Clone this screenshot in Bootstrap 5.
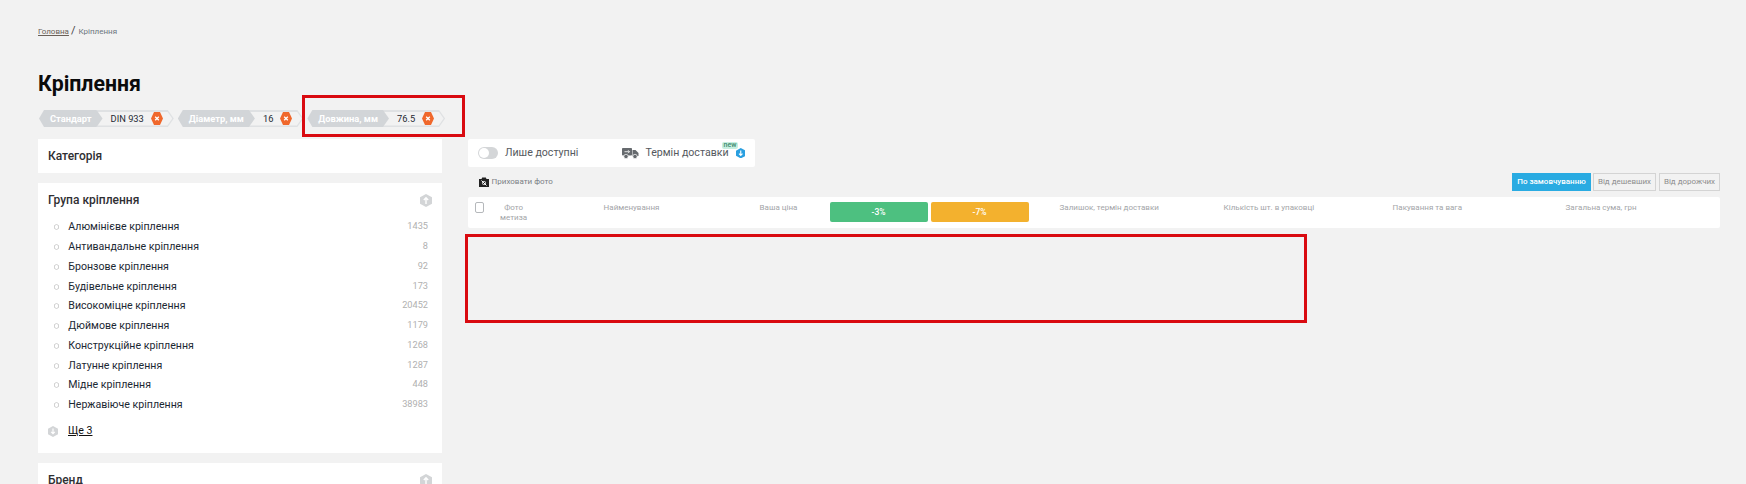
<!DOCTYPE html>
<html lang="uk">
<head>
  <meta charset="UTF-8" />
  <title>Кріплення</title>
  <link href="https://cdn.jsdelivr.net/npm/bootstrap@5.3.3/dist/css/bootstrap.min.css" rel="stylesheet" />
  <style>
    html, body { height: 484px; overflow: hidden; }
    body { background: #f2f2f2; font-family: Roboto, "Liberation Sans", sans-serif; color: #222; }
    .page-wrap { position: relative; height: 484px; overflow: hidden; padding: 25px 26px 0 38px; width: 1746px; }
    .crumbs { font-size: 8px; line-height: 12px; color: #6d7680; }
    .crumbs a { color: #6a6058; }
    .crumbs .sep { font-size: 11px; color: #444; margin: 0 3px 0 2px; }
    .page-title { font-size: 21.3px; font-weight: 700; color: #0b0b0b; line-height: 26px; margin: 33px 0 0; }
    .chips { display: flex; gap: 4px; margin-top: 13px; margin-left: 1px; height: 17px; }
    .chip { display: flex; height: 17px; }
    .chip-label { background: #d2d5d8; color: #fff; font-size: 9.3px; font-weight: 700; line-height: 17px; padding: 0 11px; clip-path: polygon(5px 0, calc(100% - 6px) 0, 100% 50%, calc(100% - 6px) 100%, 5px 100%, 0 50%); position: relative; z-index: 1; }
    .chip-value { position: relative; margin-left: -6px; display: flex; align-items: center; gap: 7px; padding: 0 11px 0 14px; font-size: 9.3px; color: #1f2a33; background: #dfe1e3; clip-path: polygon(0 0, calc(100% - 6px) 0, 100% 50%, calc(100% - 6px) 100%, 0 100%); }
    .chip-value::before { content: ""; position: absolute; inset: 1.5px 1.5px 1.5px 0; background: #f2f2f2; clip-path: polygon(0 0, calc(100% - 5px) 0, 100% 50%, calc(100% - 5px) 100%, 0 100%); }
    .chip-value > * { position: relative; }
    .columns { display: flex; gap: 25.6px; margin-top: 12px; }
    .side-col { width: 404px; flex: none; }
    .main-col { flex: 1; min-width: 0; }
    .filter-box { background: #fff; padding: 0 10px; margin-bottom: 10px; }
    .filter-head { display: flex; justify-content: space-between; align-items: center; font-size: 12px; font-weight: 500; color: #2f2f33; height: 34px; }
    .filter-list { margin: .5px 0 0; padding: 0; list-style: none; }
    .filter-list li { display: flex; align-items: center; height: 19.75px; font-size: 10.6px; color: #1c2833; }
    .filter-list .dot { width: 5px; height: 6px; margin: 0 9.3px 0 6px; flex: none; }
    .filter-list .num { margin-left: auto; margin-right: 4px; font-size: 9.2px; color: #b0b0b0; margin-top: -2px; }
    .more-link { display: flex; align-items: center; gap: 10px; margin-top: 6px; height: 20px; font-size: 10.6px; }
    .more-link a { color: #111; }
    .avail-box { width: 287px; height: 28px; background: #fff; border-radius: 2px; display: flex; align-items: center; font-size: 10.6px; color: #55595e; padding-left: 10.4px; position: relative; }
    .toggle-fake { width: 20px; height: 12px; border-radius: 6px; background: #d4d6d8; position: relative; margin-right: 7px; }
    .toggle-fake::before { content: ""; position: absolute; left: 1px; top: 1px; width: 10px; height: 10px; border-radius: 50%; background: #fff; }
    .new-tag { position: absolute; left: 254px; top: 3px; font-size: 7px; line-height: 7px; font-weight: 500; color: #3d8a6d; background: #c6efe0; border-radius: 2px; padding: 0 2px; }
    .tools-row { display: flex; justify-content: space-between; align-items: center; height: 18px; margin-top: 6px; margin-bottom: 6px; }
    .hide-photo { display: flex; align-items: center; gap: 2px; font-size: 8px; color: #7b7f85; margin-left: 10px; }
    .sort-btns { display: flex; gap: 2px; }
    .sort-btn { height: 18px; font-size: 8px; line-height: 16px; border: 1px solid #d4d4d4; color: #8d8d8d; background: #f2f2f2; white-space: nowrap; text-align: center; }
    .sort-btn.on { background: #29abe2; border-color: #29abe2; color: #fff; font-weight: 500; }
    .head-box { position: relative; height: 31px; background: #fff; border-radius: 2px; display: grid; grid-template-columns: 26px 110px 156px 70px 98px 3px 98px 31px 164px 169px 173px 1fr; font-size: 8px; color: #a3a5a8; line-height: 10px; white-space: nowrap; }
    .head-box > div { padding-top: 6px; }
    .head-check { width: 9px; height: 11px; margin: -1px 0 0 7px; border: 1px solid #b5b8bb; border-radius: 2px; }
    .head-photo { text-align: center; width: 40px; }
    .price-tag { height: 20px; margin-top: 5px; padding: 0 !important; border-radius: 2px; color: #fff; font-weight: 500; text-align: center; line-height: 20px; font-size: 8.5px; }
    .mark-frame { position: absolute; border: 3px solid #d90a10; pointer-events: none; }
    .mark-top { left: 302px; top: 95px; width: 163px; height: 42px; }
    .mark-mid { left: 465px; top: 234px; width: 842px; height: 89px; }
  </style>
</head>
<body>
  <div class="page-wrap">
    <div class="crumbs"><a href="#">Головна</a><span class="sep">/</span>Кріплення</div>
    <h1 class="page-title">Кріплення</h1>

    <div class="chips">
      <div class="chip">
        <span class="chip-label">Стандарт</span>
        <span class="chip-value"><span>DIN 933</span>
          <svg width="12" height="13" viewBox="0 0 12 13"><polygon points="3,0 9,0 12,6.5 9,13 3,13 0,6.5" fill="#f0682c"/><path d="M4.2 4.7l3.6 3.6M7.8 4.7l-3.6 3.6" stroke="#fff" stroke-width="1.3"/></svg>
        </span>
      </div>
      <div class="chip">
        <span class="chip-label">Діаметр, мм</span>
        <span class="chip-value"><span>16</span>
          <svg width="12" height="13" viewBox="0 0 12 13"><polygon points="3,0 9,0 12,6.5 9,13 3,13 0,6.5" fill="#f0682c"/><path d="M4.2 4.7l3.6 3.6M7.8 4.7l-3.6 3.6" stroke="#fff" stroke-width="1.3"/></svg>
        </span>
      </div>
      <div class="chip">
        <span class="chip-label">Довжина, мм</span>
        <span class="chip-value"><span>76.5</span>
          <svg width="12" height="13" viewBox="0 0 12 13"><polygon points="3,0 9,0 12,6.5 9,13 3,13 0,6.5" fill="#f0682c"/><path d="M4.2 4.7l3.6 3.6M7.8 4.7l-3.6 3.6" stroke="#fff" stroke-width="1.3"/></svg>
        </span>
      </div>
    </div>

    <div class="columns">
      <aside class="side-col">
        <div class="filter-box"><div class="filter-head">Категорія</div></div>

        <div class="filter-box" style="height:270px">
          <div class="filter-head">Група кріплення
            <svg width="12" height="13" viewBox="0 0 12 13"><polygon points="6,0 12,3.2 12,9.8 6,13 0,9.8 0,3.2" fill="#d3d5d7"/><path d="M6 10V4M3.8 6L6 3.8 8.2 6" stroke="#fff" stroke-width="1.4" fill="none"/></svg>
          </div>
          <ul class="filter-list" id="groupList"></ul>
          <div class="more-link">
            <svg width="10" height="11" viewBox="0 0 12 13"><polygon points="6,0 12,3.2 12,9.8 6,13 0,9.8 0,3.2" fill="#d3d5d7"/><path d="M6 3v6M3.8 7L6 9.2 8.2 7" stroke="#fff" stroke-width="1.4" fill="none"/></svg>
            <a href="#">Ще 3</a>
          </div>
        </div>

        <div class="filter-box" style="height:60px">
          <div class="filter-head">Бренд
            <svg width="12" height="13" viewBox="0 0 12 13"><polygon points="6,0 12,3.2 12,9.8 6,13 0,9.8 0,3.2" fill="#d3d5d7"/><path d="M6 10V4M3.8 6L6 3.8 8.2 6" stroke="#fff" stroke-width="1.4" fill="none"/></svg>
          </div>
        </div>
      </aside>

      <main class="main-col">
        <div class="avail-box">
          <span class="toggle-fake"></span>
          <span>Лише доступні</span>
          <svg style="margin:0 6px 0 44px" width="17" height="12" viewBox="0 0 17 12"><rect x="0" y="1" width="10" height="7.5" rx=".8" fill="#666a6e"/><path d="M10.5 3h3l3 3v3h-6z" fill="#666a6e"/><circle cx="4" cy="9.5" r="2.2" fill="#666a6e" stroke="#fff" stroke-width=".7"/><circle cx="13" cy="9.5" r="2.2" fill="#666a6e" stroke="#fff" stroke-width=".7"/><path d="M2.5 4.7h5M6 3.2l1.5 1.5L6 6.2" stroke="#fff" fill="none" stroke-width=".8"/></svg>
          <span>Термін доставки</span>
          <svg style="margin-left:7px" width="9.5" height="10.5" viewBox="0 0 12 13"><polygon points="6,0 12,3.2 12,9.8 6,13 0,9.8 0,3.2" fill="#2a9fe0"/><path d="M6 3v6M3.8 7L6 9.2 8.2 7" stroke="#fff" stroke-width="1.4" fill="none"/></svg>
          <span class="new-tag">new</span>
        </div>

        <div class="tools-row">
          <div class="hide-photo">
            <svg width="12" height="10" viewBox="0 0 10 10"><path d="M0 2h2.5L3.2.5h3.6L7.5 2H10v8H0z" fill="#222"/><path d="M2.5 3.5l5 5" stroke="#fff"/><circle cx="5" cy="6" r="1.7" fill="none" stroke="#fff" stroke-width=".7"/></svg>
            <span>Приховати фото</span>
          </div>
          <div class="sort-btns">
            <span class="sort-btn on" style="width:79px">По замовчуванню</span>
            <span class="sort-btn" style="width:63px">Від дешевших</span>
            <span class="sort-btn" style="width:61px;margin-left:1px">Від дорожчих</span>
          </div>
        </div>

        <div class="head-box">
          <div><div class="head-check"></div></div>
          <div><div class="head-photo">Фото<br>метиза</div></div>
          <div>Найменування</div>
          <div>Ваша ціна</div>
          <div class="price-tag" style="background:#4dc080">-3%</div>
          <div></div>
          <div class="price-tag" style="background:#f3b12e">-7%</div>
          <div></div>
          <div>Залишок, термін доставки</div>
          <div>Кількість шт. в упаковці</div>
          <div>Пакування та вага</div>
          <div>Загальна сума, грн</div>
        </div>
      </main>
    </div>

    <div class="mark-frame mark-top"></div>
    <div class="mark-frame mark-mid"></div>
  </div>

  <script src="https://cdn.jsdelivr.net/npm/bootstrap@5.3.3/dist/js/bootstrap.bundle.min.js"></script>
  <script>
    // Список груп кріплення
    const groups = [
      ['Алюмінієве кріплення', 1435], ['Антивандальне кріплення', 8], ['Бронзове кріплення', 92],
      ['Будівельне кріплення', 173], ['Високоміцне кріплення', 20452], ['Дюймове кріплення', 1179],
      ['Конструкційне кріплення', 1268], ['Латунне кріплення', 1287], ['Мідне кріплення', 448],
      ['Нержавіюче кріплення', 38983]
    ];
    document.getElementById('groupList').innerHTML = groups.map(g => `
      <li><svg class="dot" viewBox="0 0 5 6"><polygon points="2.5,.4 4.6,1.6 4.6,4.4 2.5,5.6 .4,4.4 .4,1.6" fill="none" stroke="#b9b9b9" stroke-width=".7"/></svg>
      <span>${g[0]}</span><span class="num">${g[1]}</span></li>`).join('');
  </script>
</body>
</html>
